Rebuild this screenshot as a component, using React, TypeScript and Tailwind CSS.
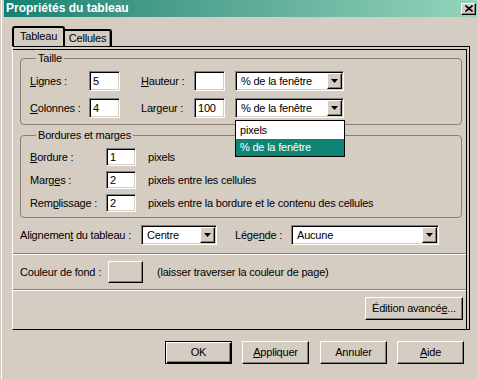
import React from 'react';

const Sel: React.FC<{ value: string; className: string; children?: React.ReactNode }> = ({ value, className, children }) => (
  <div
    className={`relative flex items-stretch bg-white border border-t-[#808080] border-l-[#808080] border-b-white border-r-white shadow-[inset_1px_1px_0_#000,inset_-1px_-1px_0_#d5cdc2] p-[1px] ${className}`}
  >
    <span className="flex-1 flex items-center pl-[4px] whitespace-nowrap">{value}</span>
    <div className="w-[15px] flex items-center justify-center bg-[#d5cdc2] border border-t-white border-l-white border-b-black border-r-black shadow-[inset_-1px_-1px_0_#808080]">
      <svg width="7" height="4" viewBox="0 0 7 4">
        <path d="M0 0h7L3.5 4z" fill="#000" />
      </svg>
    </div>
    {children}
  </div>
);

const Field: React.FC<{ value?: string; className: string }> = ({ value, className }) => (
  <div
    className={`flex items-center pl-[3px] bg-white border border-t-[#808080] border-l-[#808080] border-b-white border-r-white shadow-[inset_1px_1px_0_#000,inset_-1px_-1px_0_#d5cdc2] ${className}`}
  >
    {value}
  </div>
);

const Btn: React.FC<{ className: string; children?: React.ReactNode }> = ({ className, children }) => (
  <button
    type="button"
    className={`flex items-center justify-center bg-[#d5cdc2] border border-t-white border-l-white border-b-black border-r-black shadow-[inset_-1px_-1px_0_#808080] ${className}`}
  >
    {children}
  </button>
);

export default function App() {
  return (
    <div className="w-[477px] h-[379px] overflow-hidden bg-[#d5cdc2] text-black text-[11px] leading-[13px] tracking-[-0.2px] font-['Liberation_Sans',Arial,sans-serif]">
      <div className="h-full ml-[1px] border-l border-white pl-[2px]">
        {/* title bar */}
        <div className="h-[17px] flex items-center justify-between bg-linear-to-r from-[#0e8272] to-[#94d4bc] pl-[2px]">
          <span className="text-white font-bold text-[12px] tracking-normal">Propriétés du tableau</span>
          <div className="w-[15px] h-[12px] mr-[1px] flex items-center justify-center bg-[#d5cdc2] border border-t-white border-l-white border-b-black border-r-black shadow-[inset_-1px_-1px_0_#808080]">
            <svg width="8" height="7" viewBox="0 0 8 7">
              <path d="M0.5 0.5L7.5 6.5M7.5 0.5L0.5 6.5" stroke="#000" strokeWidth="1.6" />
            </svg>
          </div>
        </div>

        {/* tabs */}
        <div className="mt-[9px] ml-[8px] flex items-end h-[20px]">
          <div className="w-[53px] h-[20px] flex items-center justify-center pb-[2px] border-2 border-b-0 border-black rounded-t-[3px] bg-[#d5cdc2] relative z-10">
            Tableau
          </div>
          <div className="w-[47px] h-[17px] flex items-center justify-center border-t-2 border-r-2 border-black rounded-tr-[3px] shadow-[inset_-1px_0_0_#808080]">
            Cellules
          </div>
        </div>

        {/* panel */}
        <div className="ml-[8px] w-[458px] h-[284px] flex flex-col border border-black border-l-white shadow-[inset_-2px_2px_0_#d5cdc2,inset_-3px_3px_0_#000]">
          <fieldset className="mt-[5px] ml-[7px] w-[442px] border border-[#8a8072] rounded-[4px] pl-[9px] pt-[6px] pb-[6px] flex flex-col gap-[7px]">
            <legend className="ml-[6px] px-[2px]">Taille</legend>
            <div className="flex h-[20px] items-center">
              <span className="w-[59px]"><span className="underline">L</span>ignes :</span>
              <Field className="w-[31px] h-full" value="5" />
              <span className="w-[53px] ml-[21px]"><span className="underline">H</span>auteur :</span>
              <Field className="w-[31px] h-full" />
              <Sel className="ml-[10px] w-[109px] h-full" value="% de la fenêtre" />
            </div>
            <div className="flex h-[20px] items-center">
              <span className="w-[59px]"><span className="underline">C</span>olonnes :</span>
              <Field className="w-[31px] h-full" value="4" />
              <span className="w-[53px] ml-[21px]">Largeur :</span>
              <Field className="w-[31px] h-full" value="100" />
              <Sel className="ml-[10px] w-[109px] h-full z-20" value="% de la fenêtre">
                <div className="absolute left-[-1px] top-[21px] w-[110px] border border-black bg-white flex flex-col">
                  <div className="h-[18px] flex items-center pl-[4px]">pixels</div>
                  <div className="h-[17px] flex items-center pl-[4px] bg-[#108474] text-white">% de la fenêtre</div>
                </div>
              </Sel>
            </div>
          </fieldset>

          <fieldset className="mt-[4px] ml-[7px] w-[442px] border border-[#8a8072] rounded-[4px] pl-[9px] pt-[6px] pb-[5px] flex flex-col gap-[5px]">
            <legend className="ml-[6px] px-[2px]">Bordures et marges</legend>
            <div className="flex h-[18px] items-center">
              <span className="w-[76px]"><span className="underline">B</span>ordure :</span>
              <Field className="w-[30px] h-full" value="1" />
              <span className="ml-[12px]">pixels</span>
            </div>
            <div className="flex h-[18px] items-center">
              <span className="w-[76px]">Marg<span className="underline">e</span>s :</span>
              <Field className="w-[30px] h-full" value="2" />
              <span className="ml-[12px]">pixels entre les cellules</span>
            </div>
            <div className="flex h-[18px] items-center">
              <span className="w-[76px]">Rem<span className="underline">p</span>lissage :</span>
              <Field className="w-[30px] h-full" value="2" />
              <span className="ml-[12px]">pixels entre la bordure et le contenu des cellules</span>
            </div>
          </fieldset>

          <div className="mt-[7px] ml-[7px] flex h-[20px] items-center">
            <span className="w-[121px]">Alignemen<span className="underline">t</span> du tableau :</span>
            <Sel className="w-[76px] h-full" value="Centre" />
            <span className="w-[56px] ml-[18px]">Lége<span className="underline">n</span>de :</span>
            <Sel className="w-[148px] h-full" value="Aucune" />
          </div>

          <div className="mt-[8px] h-[2px] border-t border-[#8a8072] border-b border-b-white mr-[3px]" />

          <div className="mt-[6px] ml-[7px] flex h-[22px] items-center">
            <span className="w-[88px]">Couleur de fond :</span>
            <Btn className="w-[35px] h-full" />
            <span className="ml-[14px]">(laisser traverser la couleur de page)</span>
          </div>

          <div className="mt-[6px] h-[2px] border-t border-[#8a8072] border-b border-b-white mr-[3px]" />

          <div className="mt-[6px] flex justify-end pr-[6px]">
            <Btn className="w-[98px] h-[23px]">
              Édition avancé<span className="underline">e</span>...
            </Btn>
          </div>
        </div>

        {/* bottom buttons */}
        <div className="mt-[11px] ml-[161px] flex h-[23px]">
          <button
            type="button"
            className="w-[67px] h-full flex items-center justify-center border border-black shadow-[inset_1px_1px_0_#fff,inset_-1px_-1px_0_#000,inset_-2px_-2px_0_#808080]"
          >
            OK
          </button>
          <Btn className="ml-[10px] w-[67px] h-full">
            <span className="underline">A</span>ppliquer
          </Btn>
          <Btn className="ml-[11px] w-[67px] h-full">Annuler</Btn>
          <Btn className="ml-[10px] w-[67px] h-full">
            <span className="underline">A</span>ide
          </Btn>
        </div>
      </div>
    </div>
  );
}
